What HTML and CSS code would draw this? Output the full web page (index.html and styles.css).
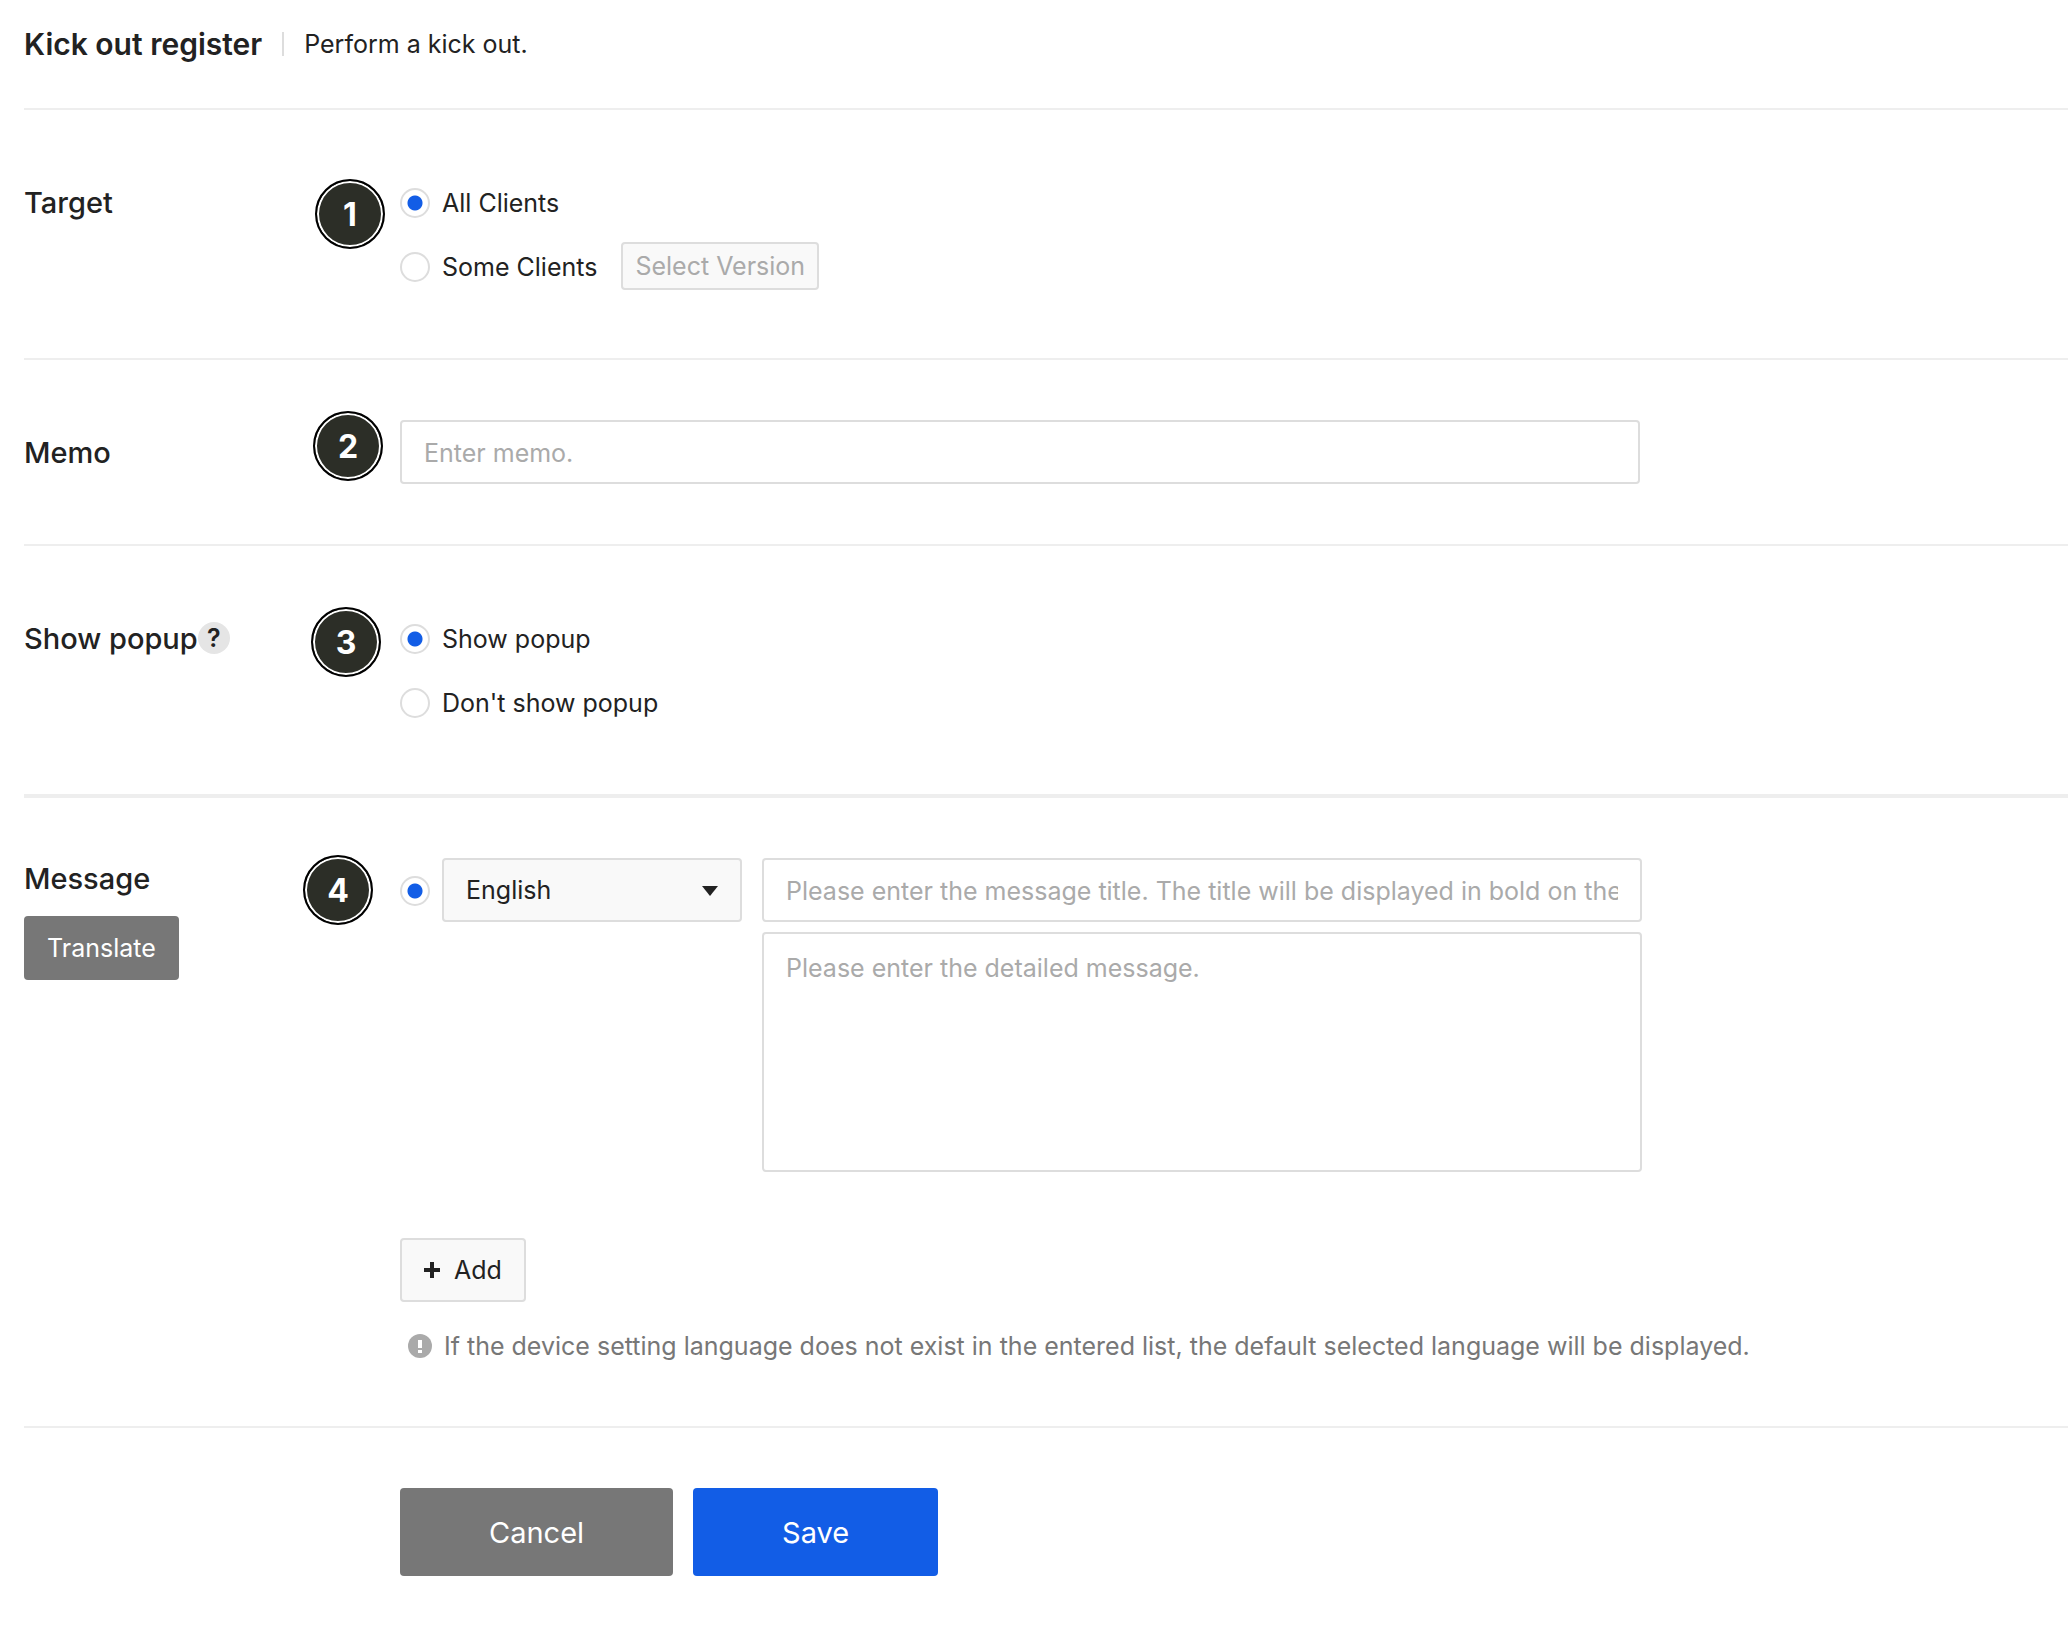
FILE: index.html
```html
<!DOCTYPE html>
<html lang="en">

<head>
  <meta charset="UTF-8">
  <meta name="viewport" content="width=device-width, initial-scale=1">
  <title>Kick out register</title>
  <link rel="stylesheet" href="styles.css">
</head>

<body>
  <main class="page">
    <header class="page-header">
      <h1 class="page-title">Kick out register</h1>
      <p class="page-desc">Perform a kick out.</p>
    </header>

    <form>
      <section class="row">
        <h2 class="row-label" id="targetLabel">Target</h2>
        <div class="row-content" role="radiogroup" aria-labelledby="targetLabel">
          <span class="step step-1">1</span>
          <div class="option">
            <input type="radio" name="target" id="targetAll" checked>
            <label for="targetAll">All Clients</label>
          </div>
          <div class="option">
            <input type="radio" name="target" id="targetSome">
            <label for="targetSome">Some Clients</label>
            <button type="button" class="btn-small" disabled>Select Version</button>
          </div>
        </div>
      </section>

      <section class="row">
        <label class="row-label" for="memo">Memo</label>
        <div class="row-content">
          <span class="step step-2">2</span>
          <input type="text" class="field memo" id="memo" placeholder="Enter memo.">
        </div>
      </section>

      <section class="row">
        <div class="row-label">
          <h2 id="popupLabel">Show popup</h2>
          <button type="button" class="help" aria-label="Help">?</button>
        </div>
        <div class="row-content" role="radiogroup" aria-labelledby="popupLabel">
          <span class="step step-3">3</span>
          <div class="option">
            <input type="radio" name="popup" id="popupShow" checked>
            <label for="popupShow">Show popup</label>
          </div>
          <div class="option">
            <input type="radio" name="popup" id="popupHide">
            <label for="popupHide">Don't show popup</label>
          </div>
        </div>
      </section>

      <section class="row row-message">
        <div class="message-side">
          <h2>Message</h2>
          <button type="button" class="btn btn-gray">Translate</button>
        </div>
        <div class="row-content">
          <span class="step step-4">4</span>
          <div class="message">
            <div class="option">
              <input type="radio" name="defaultLang" id="defaultLang" aria-label="Default language" checked>
              <div class="select">
                <select class="field" aria-label="Language">
                  <option>English</option>
                </select>
              </div>
            </div>
            <div class="message-fields">
              <input type="text" class="field" aria-label="Message title"
                placeholder="Please enter the message title. The title will be displayed in bold on the first line.">
              <textarea class="field" aria-label="Detailed message"
                placeholder="Please enter the detailed message."></textarea>
            </div>
          </div>
          <button type="button" class="btn btn-add">
            <svg width="16" height="16" viewBox="0 0 16 16" aria-hidden="true">
              <path d="M6 0h4v6h6v4h-6v6H6v-6H0V6h6z" fill="#222" />
            </svg>
            Add
          </button>
          <p class="note">
            <svg width="24" height="24" viewBox="0 0 24 24" aria-hidden="true">
              <circle cx="12" cy="12" r="12" fill="#aaa" />
              <path d="M10 6h4v8h-4zM10 16h4v3h-4z" fill="#fff" />
            </svg>
            If the device setting language does not exist in the entered list, the default selected language will be displayed.
          </p>
        </div>
      </section>

      <div class="actions">
        <button type="button" class="btn btn-large btn-gray">Cancel</button>
        <button type="submit" class="btn btn-large btn-blue">Save</button>
      </div>
    </form>
  </main>
</body>

</html>
```
FILE: styles.css
```css
:root {
  --text: #222;
  --muted: #777;
  --placeholder: #aaa;
  --border: #ddd;
  --line: #eee;
  --blue: #125de6;
  --radius: 4px;
}

* {
  box-sizing: border-box;
}

body {
  margin: 0;
  background: #fff;
  color: var(--text);
  font-family: Inter, "Liberation Sans", sans-serif;
  font-size: 25px;
}

h1,
h2,
p {
  margin: 0;
}

button,
input,
select,
textarea {
  font: inherit;
  color: inherit;
}

button {
  cursor: pointer;
}

.page {
  padding-left: 24px;
}

.page-header {
  display: flex;
  align-items: center;
  padding: 12px 0 32px;
  line-height: 64px;
  border-bottom: 2px solid var(--line);
}

.page-title {
  font-size: 30px;
  font-weight: 600;
}

.page-desc {
  display: flex;
  align-items: center;
}

.page-desc::before {
  content: "";
  width: 2px;
  height: 24px;
  margin: 0 20px;
  background: var(--border);
}

.row {
  display: grid;
  grid-template-columns: 376px 1fr;
  padding: 60px 0;
  border-bottom: 2px solid var(--line);
}

.row:nth-of-type(3) {
  border-bottom-width: 4px;
}

.row-label,
h2 {
  font-size: 29px;
  font-weight: 500;
}

.row-label {
  display: flex;
  align-items: center;
  height: 64px;
}

.row-content {
  position: relative;
}

.help {
  width: 32px;
  height: 32px;
  padding: 0;
  border: none;
  border-radius: 50%;
  background: #e5e5e5;
  font-size: 25px;
  font-weight: 600;
  line-height: 32px;
}

/* numbered markers laid over the form */
.step {
  position: absolute;
  width: 70px;
  height: 70px;
  border: 2px solid #000;
  border-radius: 50%;
  background: #2c2e27;
  box-shadow: inset 0 0 0 2px #fff;
  color: #fff;
  font-size: 32px;
  font-weight: 700;
  line-height: 68px;
  text-align: center;
}

.step-1 {
  top: 9px;
  left: -85px;
}

.step-2 {
  top: -9px;
  left: -87px;
}

.step-3 {
  top: 1px;
  left: -89px;
}

.step-4 {
  top: -3px;
  left: -97px;
}

.option {
  display: flex;
  align-items: center;
  height: 64px;
}

.option label {
  margin-top: 2px;
}

input[type="radio"] {
  appearance: none;
  flex: none;
  width: 30px;
  height: 30px;
  margin: 2px 12px 0 0;
  border: 2px solid var(--border);
  border-radius: 50%;
  background: #fff;
}

input[type="radio"]:checked {
  background: radial-gradient(circle, var(--blue) 7px, #fff 8px);
}

.btn-small {
  height: 48px;
  margin-left: 24px;
  padding: 0 12px;
  border: 2px solid var(--border);
  border-radius: var(--radius);
  background: #f9f9f9;
}

.btn-small:disabled {
  color: var(--placeholder);
  cursor: default;
}

.field {
  display: block;
  width: 100%;
  height: 64px;
  padding: 2px 22px 0;
  border: 2px solid var(--border);
  border-radius: var(--radius);
  background: #fff;
}

.field::placeholder {
  color: var(--placeholder);
  opacity: 1;
}

.memo {
  max-width: 1240px;
}

textarea.field {
  height: 240px;
  padding: 18px 22px;
  line-height: 32px;
  resize: none;
}

.select {
  position: relative;
  width: 300px;
}

.select .field {
  appearance: none;
  padding: 0 22px;
  background: #f9f9f9;
}

.select::after {
  content: "";
  position: absolute;
  top: 28px;
  right: 24px;
  border: 8px solid transparent;
  border-top: 10px solid var(--text);
  border-bottom: none;
  pointer-events: none;
}

.message-side h2 {
  margin-bottom: 16px;
  line-height: 42px;
}

.message {
  display: flex;
  gap: 20px;
  max-width: 1242px;
  margin-bottom: 66px;
}

.message-fields {
  display: flex;
  flex: 1;
  flex-direction: column;
  gap: 10px;
}

.btn {
  display: inline-flex;
  align-items: center;
  justify-content: center;
  height: 64px;
  padding: 0 23px;
  border: none;
  border-radius: var(--radius);
}

.btn-gray {
  background: var(--muted);
  color: #fff;
}

.btn-blue {
  background: var(--blue);
  color: #fff;
}

.btn-add {
  gap: 14px;
  padding: 0 22px;
  border: 2px solid var(--border);
  background: #f9f9f9;
}

.btn-large {
  height: 88px;
  padding: 0 89px;
  font-size: 29px;
}

.note {
  display: flex;
  align-items: center;
  gap: 12px;
  margin-top: 24px;
  padding-left: 8px;
  color: var(--muted);
  line-height: 40px;
}

.actions {
  display: flex;
  gap: 20px;
  padding: 60px 0 54px 376px;
}
```
